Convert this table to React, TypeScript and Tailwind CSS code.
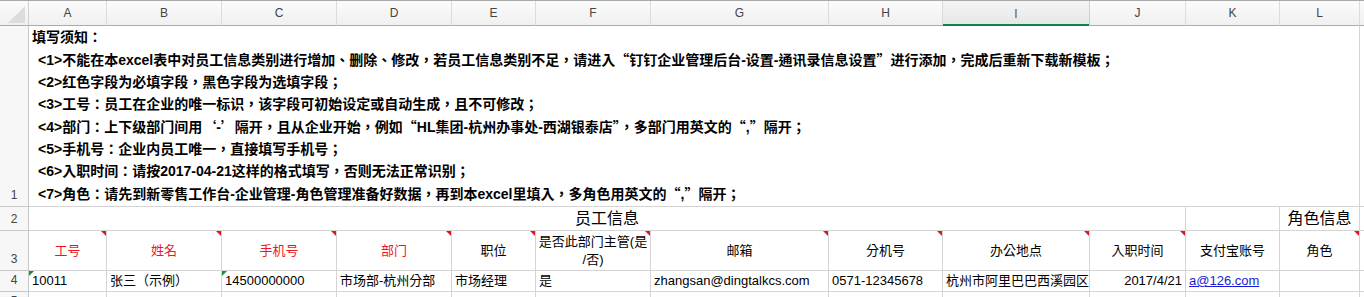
const cols = ["A", "B", "C", "D", "E", "F", "G", "H", "I", "J", "K", "L"];

const notes = [
  "<1>不能在本excel表中对员工信息类别进行增加、删除、修改，若员工信息类别不足，请进入“钉钉企业管理后台-设置-通讯录信息设置”进行添加，完成后重新下载新模板；",
  "<2>红色字段为必填字段，黑色字段为选填字段；",
  "<3>工号：员工在企业的唯一标识，该字段可初始设定或自动生成，且不可修改；",
  "<4>部门：上下级部门间用‘-’隔开，且从企业开始，例如“HL集团-杭州办事处-西湖银泰店”，多部门用英文的“,”隔开；",
  "<5>手机号：企业内员工唯一，直接填写手机号；",
  "<6>入职时间：请按2017-04-21这样的格式填写，否则无法正常识别；",
  "<7>角色：请先到新零售工作台-企业管理-角色管理准备好数据，再到本excel里填入，多角色用英文的“,”隔开；",
];

const heads = [
  { t: "工号", red: true, mark: true },
  { t: "姓名", red: true, mark: true },
  { t: "手机号", red: true, mark: true },
  { t: "部门", red: true, mark: true },
  { t: "职位", red: false, mark: true },
  { t: "是否此部门主管(是/否)", red: false, mark: true },
  { t: "邮箱", red: false, mark: true },
  { t: "分机号", red: false, mark: true },
  { t: "办公地点", red: false, mark: true },
  { t: "入职时间", red: false, mark: true },
  { t: "支付宝账号", red: false, mark: false },
  { t: "角色", red: false, mark: true },
];

const sample = [
  { t: "10011", green: true },
  { t: "张三（示例）" },
  { t: "14500000000", green: true },
  { t: "市场部-杭州分部" },
  { t: "市场经理" },
  { t: "是" },
  { t: "zhangsan@dingtalkcs.com" },
  { t: "0571-12345678" },
  { t: "杭州市阿里巴巴西溪园区" },
  { t: "2017/4/21", right: true },
  { t: "a@126.com", link: true },
  { t: "" },
];

const cell = "relative border-r border-b border-[#d4d4d4]";
const rowHead =
  "flex items-end justify-center pb-[2px] bg-[#f7f7f7] border-r border-b border-[#c8c8c8] text-[12px] text-[#444]";

// curly quotes should be full width like the CJK text around them
function Note({ text }: { text: string }) {
  const parts = text.split(/([‘’“”])/);
  return (
    <>
      {parts.map((p, i) =>
        /[‘’“”]/.test(p) ? (
          <span key={i} style={{ fontFamily: '"Noto Sans CJK TC", sans-serif' }}>
            {p}
          </span>
        ) : (
          p
        )
      )}
    </>
  );
}

function RedMark() {
  return (
    <span className="absolute top-0 right-0 w-0 h-0 border-t-[5px] border-t-[#e8141b] border-l-[5px] border-l-transparent" />
  );
}

function GreenMark() {
  return (
    <span className="absolute top-0 left-0 w-0 h-0 border-t-[5px] border-t-[#16913d] border-r-[5px] border-r-transparent" />
  );
}

export default function App() {
  return (
    <div
      className="w-[1364px] h-[297px] overflow-hidden bg-white border-t border-[#a9a9a9] text-[13px] text-black"
      style={{ fontFamily: '"Liberation Sans", "Noto Sans CJK TC", sans-serif' }}
    >
      <div className="grid grid-cols-[29px_78px_115px_115px_115px_84px_115px_178px_114px_147px_96px_94px_80px_1fr] grid-rows-[25px_181px_24px_40px_21px_21px]">
        {/* column headers */}
        <div className="relative bg-linear-to-b from-[#fbfbfb] to-[#f0f0f0] border-r border-b border-r-[#d0d0d0] border-b-[#ababab]">
          <span className="absolute right-[3px] bottom-[2px] w-0 h-0 border-b-[17px] border-b-[#dcdcdc] border-l-[17px] border-l-transparent" />
        </div>
        {cols.map((c) =>
          c === "I" ? (
            <div
              key={c}
              className="relative flex items-center justify-center bg-linear-to-b from-[#f4f4f4] to-[#e6e6e6] border-r border-[#d0d0d0] text-[12px] text-[#6b5a1e]"
            >
              {c}
              <span className="absolute left-0 right-0 bottom-0 h-[2px] bg-[#10834a]" />
            </div>
          ) : (
            <div
              key={c}
              className="flex items-center justify-center bg-linear-to-b from-[#fbfbfb] to-[#f0f0f0] border-r border-b border-r-[#dcdcdc] border-b-[#ababab] text-[12px] text-[#444]"
            >
              {c}
            </div>
          )
        )}
        <div className="bg-linear-to-b from-[#fbfbfb] to-[#f0f0f0] border-b border-[#ababab]" />

        {/* row 1 */}
        <div className={rowHead}>1</div>
        <div className={`${cell} col-span-12 flex flex-col justify-end font-bold text-[14px] leading-[22px] pl-[3px] pb-[1px]`}>
          <div>填写须知：</div>
          {notes.map((n) => (
            <div key={n} className="pl-[6px] whitespace-nowrap">
              <Note text={n} />
            </div>
          ))}
        </div>
        <div className="border-b border-[#d4d4d4]" />

        {/* row 2 */}
        <div className={rowHead}>2</div>
        <div className={`${cell} col-span-10 flex items-center justify-center text-[16px]`}>员工信息</div>
        <div className={cell} />
        <div className={`${cell} flex items-center justify-center text-[16px]`}>角色信息</div>
        <div className="border-b border-[#d4d4d4]" />

        {/* row 3 */}
        <div className={rowHead}>3</div>
        {heads.map((h) => (
          <div
            key={h.t}
            className={`${cell} flex flex-col items-center justify-center text-center leading-[18px] px-[2px] ${h.red ? "text-[#f0161e]" : "text-black"}`}
          >
            {h.t === "是否此部门主管(是/否)" ? (
              <>
                <span className="whitespace-nowrap">是否此部门主管(是</span>
                <span>/否)</span>
              </>
            ) : (
              h.t
            )}
            {h.mark && <RedMark />}
          </div>
        ))}
        <div className="border-b border-[#d4d4d4]" />

        {/* row 4 */}
        <div className={rowHead}>4</div>
        {sample.map((s, i) => (
          <div
            key={i}
            className={`${cell} flex items-center whitespace-nowrap overflow-hidden px-[3px] ${s.right ? "justify-end" : "justify-start"}`}
          >
            {s.green && <GreenMark />}
            {s.link ? <span className="text-[#1a1ad6] underline">{s.t}</span> : s.t}
          </div>
        ))}
        <div className="border-b border-[#d4d4d4]" />

        {/* row 5 */}
        <div className={rowHead}>5</div>
        {cols.map((c) => (
          <div key={c} className={cell} />
        ))}
        <div />
      </div>
    </div>
  );
}
